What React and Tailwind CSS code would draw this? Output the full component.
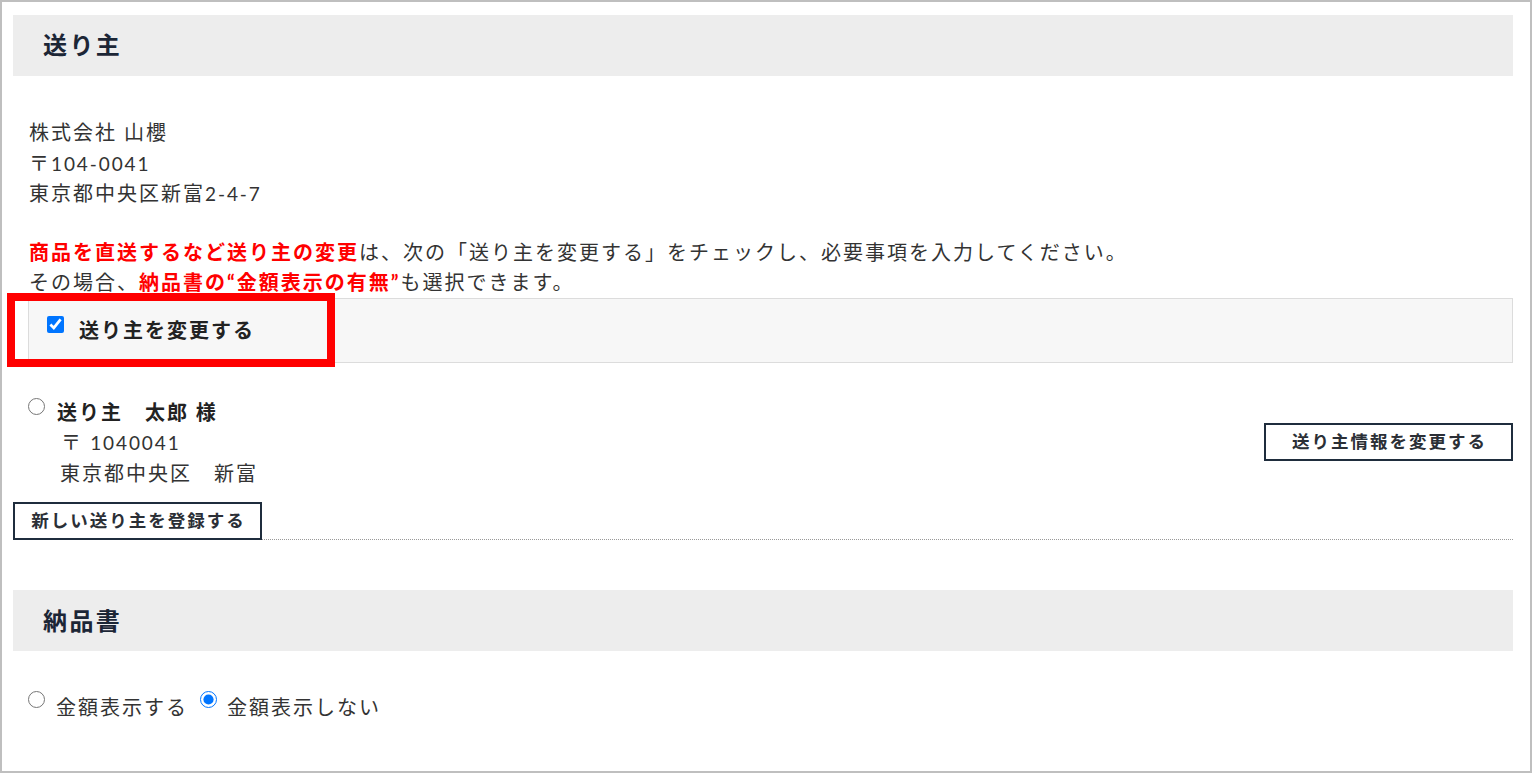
function SectionHeader({ title }) {
  return (
    <div className="flex h-[61px] items-center bg-[#ededed] pl-[30px] text-[24px] font-bold tracking-[0.1em] text-[#1c2636]">
      {title}
    </div>
  )
}

function OutlineButton({ children }) {
  return (
    <button className="flex h-[38px] w-[249px] shrink-0 items-center justify-center border-2 border-[#1f2d3d] bg-white pl-[2px] text-[17.5px] font-bold tracking-[2px] text-[#2b2f36]">
      {children}
    </button>
  )
}

function Num({ children }) {
  return <span className="text-[19px] leading-none tracking-[0.1em]">{children}</span>
}

export default function App() {
  return (
    <div className="relative h-[773px] w-[1532px] overflow-hidden border-2 border-[#bfbfbf] bg-white pl-[11px] pr-[17px] pt-[13px] font-[Lato,'Noto_Sans_CJK_JP',sans-serif] text-[20px] leading-[30.6px] tracking-[0.1em] text-[#333]">
      {/* 送り主 */}
      <SectionHeader title="送り主" />

      <div className="mt-[41px] pl-[16px]">
        <p>株式会社 山櫻</p>
        <p>
          〒<Num>104-0041</Num>
        </p>
        <p>
          東京都中央区新富<Num>2-4-7</Num>
        </p>
      </div>

      <div className="mt-[28px] pl-[16px]">
        <p>
          <span className="font-bold text-[#ff0000]">商品を直送するなど送り主の変更</span>
          は、次の「送り主を変更する」をチェックし、必要事項を入力してください。
        </p>
        <p>
          その場合、<span className="font-bold text-[#ff0000]">納品書の“金額表示の有無”</span>も選択できます。
        </p>
      </div>

      <div className="ml-[15px] border border-[#dcdcdc] bg-[#f7f7f7] py-[16px] pl-[18px]">
        <label className="flex items-start">
          <input
            type="checkbox"
            defaultChecked
            className="m-0 mt-[1px] h-[17px] w-[17px] accent-[#0075ff]"
          />
          <span className="ml-[15px] font-bold text-[#222]">送り主を変更する</span>
        </label>
      </div>

      <div className="mt-[34px] flex items-center justify-between">
        <div className="flex items-start pl-[15px]">
          <input type="radio" name="sender" className="m-0 mt-[1px] h-[17px] w-[17px]" />
          <div className="ml-[12px]">
            <p className="font-bold text-[#222]">送り主　太郎 様</p>
            <p className="pl-[4px]">
              〒 <Num>1040041</Num>
            </p>
            <p className="pl-[3px]">東京都中央区　新富</p>
          </div>
        </div>
        <OutlineButton>送り主情報を変更する</OutlineButton>
      </div>

      <div className="mt-[14px] flex items-end">
        <OutlineButton>新しい送り主を登録する</OutlineButton>
        <div className="flex-1 border-b border-dotted border-[#999]" />
      </div>

      {/* 納品書 */}
      <div className="mt-[50px]">
        <SectionHeader title="納品書" />
      </div>

      <div className="mt-[41px] flex items-start pl-[15px]">
        <label className="flex items-start">
          <input type="radio" name="invoice" className="m-0 mt-[-1px] h-[17px] w-[17px]" />
          <span className="ml-[11px]">金額表示する</span>
        </label>
        <label className="ml-[12px] flex items-start">
          <input
            type="radio"
            name="invoice"
            defaultChecked
            className="m-0 mt-[-1px] h-[17px] w-[17px] accent-[#0075ff]"
          />
          <span className="ml-[10px]">金額表示しない</span>
        </label>
      </div>

      {/* annotation */}
      <div className="pointer-events-none absolute left-[5px] top-[291px] h-[74px] w-[328px] border-[8px] border-[#ff0000]" />
    </div>
  )
}
